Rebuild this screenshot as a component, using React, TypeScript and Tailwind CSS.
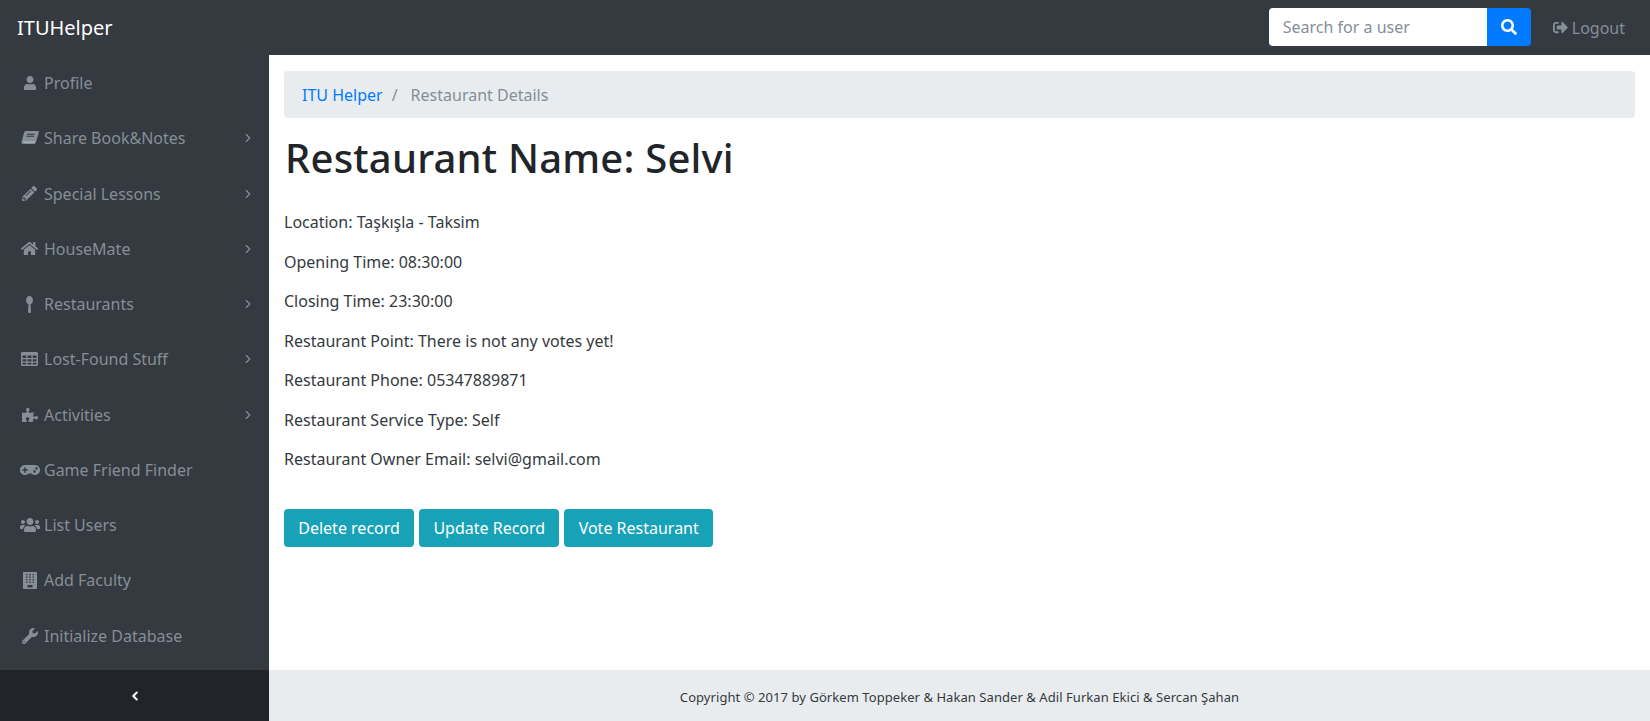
import React from "react";
import {
  FaUser,
  FaPencilAlt,
  FaHome,
  FaPuzzlePiece,
  FaGamepad,
  FaUsers,
  FaWrench,
  FaSearch,
  FaSignOutAlt,
} from "react-icons/fa";
import { LuChevronRight, LuChevronLeft } from "react-icons/lu";

const BookIcon: React.FC = () => (
  <svg viewBox="0 0 18 16" className="h-[16px] w-[18px]" fill="currentColor">
    <path d="M5 1h12c.7 0 1 .5.8 1.200l-2.900 10.300c-.3.900-.9 1.500-1.900 1.500H2.500C1 14 .2 12.800.6 11.400L3 3c.3-1.200 1-2 2-2z" />
    <path d="M3.200 11.200h10.600l-.5 1.500H3c-.9 0-.9-1.500.2-1.500z" fill="#aab0b6" />
    <path d="M6.300 3.800h7.500l-.3 1H6zM5.700 5.800h7.500l-.3 1H5.400z" fill="#343a40" />
  </svg>
);

const SpoonIcon: React.FC = () => (
  <svg viewBox="0 0 16 16" className="h-[17px] w-[17px]" fill="currentColor">
    <path d="M8 0c2 0 3.200 1.800 3.200 3.900 0 1.900-1 3.400-2.200 3.900l.4 7.200c0 .6-.6 1-1.400 1s-1.400-.4-1.400-1l.4-7.200C5.800 7.300 4.800 5.800 4.800 3.900 4.800 1.800 6 0 8 0z" />
  </svg>
);

const TableIcon: React.FC = () => (
  <svg viewBox="0 0 17 14" className="h-[14px] w-[17px]" fill="currentColor">
    <path
      fillRule="evenodd"
      d="M1.500 0h14c.8 0 1.500.7 1.500 1.500v11c0 .8-.7 1.500-1.500 1.500h-14C.7 14 0 13.300 0 12.500v-11C0 .7.700 0 1.500 0zM1.500 3.500v2.500h3.800V3.500zm5 0v2.500h4V3.500zm5.200 0v2.500h3.800V3.500zM1.500 7.200v2.300h3.800V7.200zm5 0v2.300h4V7.200zm5.200 0v2.300h3.800V7.200zM1.500 10.700v1.800h3.800v-1.800zm5 0v1.800h4v-1.800zm5.200 0v1.800h3.800v-1.800z"
    />
  </svg>
);

const BuildingIcon: React.FC = () => (
  <svg viewBox="0 0 14 17" className="h-[17px] w-[14px]" fill="currentColor">
    <path
      fillRule="evenodd"
      d="M.8 0h12.400c.4 0 .8.400.8.800v15.400c0 .4-.4.800-.8.800H.8c-.4 0-.8-.4-.8-.8V.8C0 .4.400 0 .8 0zM3 2v1.300h1.500V2zm3.200 0v1.300h1.600V2zm3.300 0v1.300H11V2zM3 4.500v1.300h1.500V4.500zm3.200 0v1.300h1.600V4.500zm3.300 0v1.300H11V4.500zM3 7v1.300h1.500V7zm3.200 0v1.300h1.600V7zm3.300 0v1.300H11V7zM3 9.500v1.300h1.500V9.500zm3.200 0v1.300h1.600V9.500zm3.300 0v1.300H11V9.500zM4.500 13v2.500h5V13z"
    />
  </svg>
);

type NavItem = { label: string; icon: React.ReactNode; arrow?: boolean };

const navItems: NavItem[] = [
  { label: "Profile", icon: <FaUser size={14} /> },
  { label: "Share Book&Notes", icon: <BookIcon />, arrow: true },
  { label: "Special Lessons", icon: <FaPencilAlt size={15} />, arrow: true },
  { label: "HouseMate", icon: <FaHome size={17} />, arrow: true },
  { label: "Restaurants", icon: <SpoonIcon />, arrow: true },
  { label: "Lost-Found Stuff", icon: <TableIcon />, arrow: true },
  { label: "Activities", icon: <FaPuzzlePiece size={16} />, arrow: true },
  { label: "Game Friend Finder", icon: <FaGamepad size={20} /> },
  { label: "List Users", icon: <FaUsers size={20} /> },
  { label: "Add Faculty", icon: <BuildingIcon /> },
  { label: "Initialize Database", icon: <FaWrench size={16} /> },
];

const details = [
  "Location: Taşkışla - Taksim",
  "Opening Time: 08:30:00",
  "Closing Time: 23:30:00",
  "Restaurant Point: There is not any votes yet!",
  "Restaurant Phone: 05347889871",
  "Restaurant Service Type: Self",
  "Restaurant Owner Email: selvi@gmail.com",
];

const buttons = ["Delete record", "Update Record", "Vote Restaurant"];

export default function App() {
  return (
    <div className="flex h-[721px] flex-col overflow-hidden bg-white font-['Noto_Sans',sans-serif] text-[16px] text-[#212529]">
      <header className="flex h-[55px] shrink-0 items-center bg-[#343a40] pl-[17px] pr-[25px]">
        <span className="text-[20px] text-white">ITUHelper</span>
        <div className="mb-[1px] ml-auto flex h-[38px] w-[262px] overflow-hidden rounded-[4px]">
          <input
            readOnly
            placeholder="Search for a user"
            className="h-full w-[218px] bg-white px-[14px] text-[16px] outline-none placeholder:text-[#868e96]"
          />
          <button className="flex w-[44px] items-center justify-center bg-[#007bff] text-white">
            <FaSearch size={16} />
          </button>
        </div>
        <a className="ml-[22px] flex items-center gap-[4px] text-[#868e96]">
          <FaSignOutAlt size={15} />
          Logout
        </a>
      </header>

      <div className="flex min-h-0 flex-1">
        <aside className="flex w-[269px] shrink-0 flex-col bg-[#343a40]">
          <nav className="flex flex-1 flex-col">
            {navItems.map((item) => (
              <a
                key={item.label}
                className="flex h-[55.25px] items-center pl-[19px] pr-[14px] pt-[1px] text-[#868e96]"
              >
                <span className="flex w-[25px] shrink-0 items-center justify-center pr-[4px]">
                  {item.icon}
                </span>
                <span>{item.label}</span>
                {item.arrow && <LuChevronRight size={14} className="ml-auto" />}
              </a>
            ))}
          </nav>
          <div className="flex h-[51px] shrink-0 items-center justify-center bg-[#212529] text-white">
            <LuChevronLeft size={14} strokeWidth={3.5} />
          </div>
        </aside>

        <div className="flex min-w-0 flex-1 flex-col">
          <main className="flex-1 px-[15px] pt-[16px]">
            <ol className="flex h-[47px] items-center rounded-[4px] bg-[#e9ecef] px-[18px]">
              <li className="text-[#007bff]">ITU Helper</li>
              <li className="px-[9px] text-[#868e96]">/</li>
              <li className="pl-[4px] text-[#868e96]">Restaurant Details</li>
            </ol>
            <h1 className="mt-[10px] mb-[22px] pl-[1px] text-[40px] leading-[60px] font-medium tracking-[0.2px]">
              Restaurant Name: Selvi
            </h1>
            <div className="flex flex-col gap-[15.5px]">
              {details.map((line) => (
                <p key={line} className="leading-[24px] text-[#343a40]">
                  {line}
                </p>
              ))}
            </div>
            <div className="mt-[38px] flex gap-[5px]">
              {buttons.map((label) => (
                <button
                  key={label}
                  className="h-[38px] rounded-[4px] bg-[#17a2b8] px-[14.25px] text-white"
                >
                  {label}
                </button>
              ))}
            </div>
          </main>
          <footer className="flex h-[51px] shrink-0 items-center justify-center bg-[#e9ecef] pt-[5px] text-[13px] tracking-[0.06px] text-[#343a40]">
            Copyright © 2017 by Görkem Toppeker &amp; Hakan Sander &amp; Adil Furkan Ekici &amp; Sercan Şahan
          </footer>
        </div>
      </div>
    </div>
  );
}
